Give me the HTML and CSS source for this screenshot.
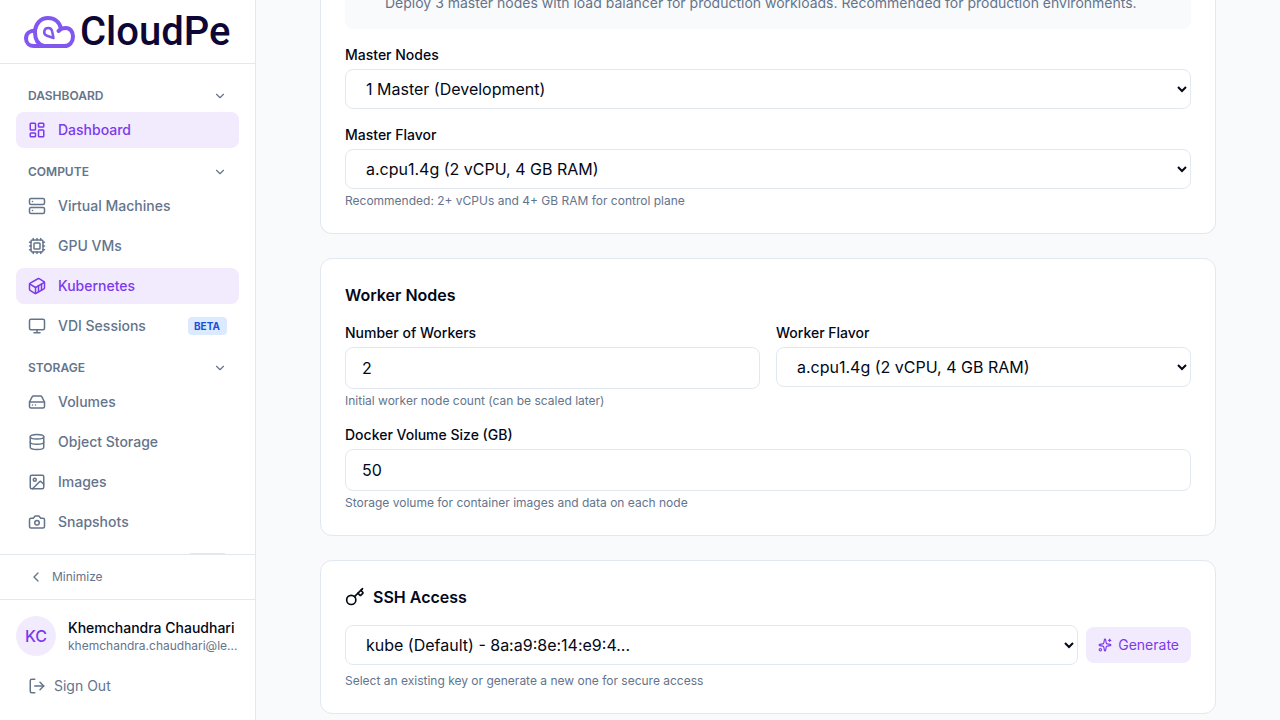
FILE: index.html
```html
<!DOCTYPE html>
<html lang="en">
<head>
    <meta charset="UTF-8">
    <meta name="viewport" content="width=device-width, initial-scale=1.0">
    <title>CloudPe - Create Kubernetes Cluster</title>
    <link rel="stylesheet" href="styles.css">
</head>
<body>
    <div class="app">
        <aside class="sidebar">
            <a class="logo" href="#">
                <svg class="logo-mark" viewBox="0 0 52 34" fill="none" stroke="#8257f0" stroke-width="4" stroke-linecap="round" stroke-linejoin="round">
                    <path d="M34.500 16C36 14 39 13 42 13C46 13 49 16.500 49 21.500C49 27 45.500 31 40.500 31H20C14 29.500 11 25 11 17.500C11 8.500 17 3 24 3C30.500 3 35.500 7 37 13.500"/>
                    <path d="M11 15.500C6 15.500 2 18.500 2 23.500C2 28 5.500 31 10 31H21"/>
                    <path d="M29.500 23L23 20.800A4 4 0 1 1 28.200 16.500Z" stroke-width="2.500"/>
                </svg>
                <span class="logo-text">CloudPe</span>
            </a>

            <nav class="nav">
                <section class="nav-section">
                    <button class="nav-heading" type="button">DASHBOARD
                        <svg class="icon icon-sm" viewBox="0 0 24 24"><path d="m6 9 6 6 6-6"/></svg>
                    </button>
                    <a class="nav-item active" href="#">
                        <svg class="icon" viewBox="0 0 24 24"><rect width="7" height="9" x="3" y="3" rx="1"/><rect width="7" height="5" x="14" y="3" rx="1"/><rect width="7" height="9" x="14" y="12" rx="1"/><rect width="7" height="5" x="3" y="16" rx="1"/></svg>
                        Dashboard
                    </a>
                </section>

                <section class="nav-section">
                    <button class="nav-heading" type="button">COMPUTE
                        <svg class="icon icon-sm" viewBox="0 0 24 24"><path d="m6 9 6 6 6-6"/></svg>
                    </button>
                    <a class="nav-item" href="#">
                        <svg class="icon" viewBox="0 0 24 24"><rect width="20" height="8" x="2" y="2" rx="2"/><rect width="20" height="8" x="2" y="14" rx="2"/><path d="M6 6h.01M6 18h.01"/></svg>
                        Virtual Machines
                    </a>
                    <a class="nav-item" href="#">
                        <svg class="icon" viewBox="0 0 24 24"><path d="M12 20v2M12 2v2M17 20v2M17 2v2M2 12h2M2 17h2M2 7h2M20 12h2M20 17h2M20 7h2M7 20v2M7 2v2"/><rect x="4" y="4" width="16" height="16" rx="2"/><rect x="8" y="8" width="8" height="8" rx="1"/></svg>
                        GPU VMs
                    </a>
                    <a class="nav-item active" href="#">
                        <svg class="icon" viewBox="0 0 24 24"><path d="M22 7.7c0-.6-.4-1.2-.8-1.5l-6.3-3.9a1.72 1.72 0 0 0-1.7 0l-10.3 6c-.5.2-.9.8-.9 1.4v6.6c0 .5.4 1.2.8 1.5l6.3 3.9a1.72 1.72 0 0 0 1.7 0l10.3-6c.5-.3.9-1 .9-1.5Z"/><path d="M10 21.9V14L2.1 9.1"/><path d="m10 14 11.9-6.9"/><path d="M14 19.8v-8.1"/><path d="M18 17.5V9.4"/></svg>
                        Kubernetes
                    </a>
                    <a class="nav-item" href="#">
                        <svg class="icon" viewBox="0 0 24 24"><rect width="20" height="14" x="2" y="3" rx="2"/><path d="M8 21h8M12 17v4"/></svg>
                        VDI Sessions
                        <span class="badge">BETA</span>
                    </a>
                </section>

                <section class="nav-section">
                    <button class="nav-heading" type="button">STORAGE
                        <svg class="icon icon-sm" viewBox="0 0 24 24"><path d="m6 9 6 6 6-6"/></svg>
                    </button>
                    <a class="nav-item" href="#">
                        <svg class="icon" viewBox="0 0 24 24"><path d="M22 12H2"/><path d="M5.450 5.110 2 12v6a2 2 0 0 0 2 2h16a2 2 0 0 0 2-2v-6l-3.450-6.890A2 2 0 0 0 16.760 4H7.240a2 2 0 0 0-1.790 1.110z"/><path d="M6 16h.01M10 16h.01"/></svg>
                        Volumes
                    </a>
                    <a class="nav-item" href="#">
                        <svg class="icon" viewBox="0 0 24 24"><ellipse cx="12" cy="5" rx="9" ry="3"/><path d="M3 5v14a9 3 0 0 0 18 0V5"/><path d="M3 12a9 3 0 0 0 18 0"/></svg>
                        Object Storage
                    </a>
                    <a class="nav-item" href="#">
                        <svg class="icon" viewBox="0 0 24 24"><rect width="18" height="18" x="3" y="3" rx="2"/><circle cx="9" cy="9" r="2"/><path d="m21 15-3.086-3.086a2 2 0 0 0-2.828 0L6 21"/></svg>
                        Images
                    </a>
                    <a class="nav-item" href="#">
                        <svg class="icon" viewBox="0 0 24 24"><path d="M14.500 4h-5L7 7H4a2 2 0 0 0-2 2v9a2 2 0 0 0 2 2h16a2 2 0 0 0 2-2V9a2 2 0 0 0-2-2h-3l-2.500-3z"/><circle cx="12" cy="13" r="3"/></svg>
                        Snapshots
                    </a>
                    <div class="nav-item">
                        <span class="badge badge-muted"></span>
                    </div>
                </section>
            </nav>

            <div class="minimize">
                <button class="minimize-btn" type="button">
                    <svg class="icon icon-md" viewBox="0 0 24 24"><path d="m15 18-6-6 6-6"/></svg>
                    Minimize
                </button>
            </div>

            <div class="account">
                <div class="user">
                    <div class="avatar">KC</div>
                    <div class="user-info">
                        <p class="user-name">Khemchandra Chaudhari</p>
                        <p class="user-email">khemchandra.chaudhari@le...</p>
                    </div>
                </div>
                <button class="sign-out" type="button">
                    <svg class="icon" viewBox="0 0 24 24"><path d="m16 17 5-5-5-5"/><path d="M21 12H9"/><path d="M9 21H5a2 2 0 0 1-2-2V5a2 2 0 0 1 2-2h4"/></svg>
                    Sign Out
                </button>
            </div>
        </aside>

        <main class="main">
            <form class="content">
                <section class="card card-continued">
                    <p class="note">Deploy 3 master nodes with load balancer for production workloads. Recommended for production environments.</p>
                    <div class="field">
                        <label for="masterNodes">Master Nodes</label>
                        <select id="masterNodes">
                            <option>1 Master (Development)</option>
                        </select>
                    </div>
                    <div class="field">
                        <label for="masterFlavor">Master Flavor</label>
                        <select id="masterFlavor">
                            <option>a.cpu1.4g (2 vCPU, 4 GB RAM)</option>
                        </select>
                        <p class="hint">Recommended: 2+ vCPUs and 4+ GB RAM for control plane</p>
                    </div>
                </section>

                <section class="card">
                    <h2>Worker Nodes</h2>
                    <div class="field-row">
                        <div class="field">
                            <label for="workerCount">Number of Workers</label>
                            <input type="text" inputmode="numeric" id="workerCount" value="2">
                            <p class="hint">Initial worker node count (can be scaled later)</p>
                        </div>
                        <div class="field">
                            <label for="workerFlavor">Worker Flavor</label>
                            <select id="workerFlavor">
                                <option>a.cpu1.4g (2 vCPU, 4 GB RAM)</option>
                            </select>
                        </div>
                    </div>
                    <div class="field">
                        <label for="volumeSize">Docker Volume Size (GB)</label>
                        <input type="text" inputmode="numeric" id="volumeSize" value="50">
                        <p class="hint">Storage volume for container images and data on each node</p>
                    </div>
                </section>

                <section class="card">
                    <h2 id="sshTitle">
                        <svg class="icon icon-lg" viewBox="0 0 24 24"><path d="m15.500 7.500 2.300 2.300a1 1 0 0 0 1.400 0l2.100-2.100a1 1 0 0 0 0-1.400L19 4"/><path d="m21 2-9.600 9.600"/><circle cx="7.500" cy="15.500" r="5.500"/></svg>
                        SSH Access
                    </h2>
                    <div class="key-field">
                        <div class="key-row">
                            <select id="sshKey" aria-labelledby="sshTitle">
                                <option>kube (Default) - 8a:a9:8e:14:e9:4...</option>
                            </select>
                            <button class="generate-btn" type="button">
                                <svg class="icon icon-sm" viewBox="0 0 24 24"><path d="M11.017 2.814a1 1 0 0 1 1.966 0l1.051 5.558a2 2 0 0 0 1.594 1.594l5.558 1.051a1 1 0 0 1 0 1.966l-5.558 1.051a2 2 0 0 0-1.594 1.594l-1.051 5.558a1 1 0 0 1-1.966 0l-1.051-5.558a2 2 0 0 0-1.594-1.594l-5.558-1.051a1 1 0 0 1 0-1.966l5.558-1.051a2 2 0 0 0 1.594-1.594z"/><path d="M20 2v4M22 4h-4"/><circle cx="4" cy="20" r="2"/></svg>
                                Generate
                            </button>
                        </div>
                        <p class="hint">Select an existing key or generate a new one for secure access</p>
                    </div>
                </section>
            </form>
        </main>
    </div>
</body>
</html>
```

FILE: styles.css
```css
:root {
    --primary: #7c3aed;
    --primary-light: #f2ebfd;
    --text: #020817;
    --muted: #64748b;
    --border: #e2e8f0;
    --background: #f8fafc;
}

* {
    margin: 0;
    padding: 0;
    box-sizing: border-box;
}

body {
    font-family: Inter, "Liberation Sans", sans-serif;
    font-size: 14px;
    line-height: 20px;
    color: var(--text);
    background-color: var(--background);
}

button,
input,
select {
    font: inherit;
    color: inherit;
}

button {
    background: none;
    border: none;
    cursor: pointer;
}

a {
    color: inherit;
    text-decoration: none;
}

.app {
    display: flex;
    height: 100vh;
    overflow: hidden;
}

.icon {
    width: 18px;
    height: 18px;
    flex-shrink: 0;
    fill: none;
    stroke: currentColor;
    stroke-width: 2;
    stroke-linecap: round;
    stroke-linejoin: round;
}

.icon-sm {
    width: 14px;
    height: 14px;
}

.icon-md {
    width: 16px;
    height: 16px;
}

.icon-lg {
    width: 20px;
    height: 20px;
}

/* Sidebar */
.sidebar {
    display: flex;
    flex-direction: column;
    flex-shrink: 0;
    width: 256px;
    background-color: white;
    border-right: 1px solid var(--border);
    color: var(--muted);
}

.logo {
    display: flex;
    align-items: center;
    gap: 4px;
    flex-shrink: 0;
    height: 64px;
    padding: 1px 24px 0;
    border-bottom: 1px solid var(--border);
}

.logo-mark {
    width: 52px;
    height: 34px;
    flex-shrink: 0;
}

.logo-text {
    font-family: Roboto, "Liberation Sans", sans-serif;
    font-size: 40px;
    font-weight: 500;
    line-height: 48px;
    color: #0e0736;
}

.nav {
    flex: 1;
    min-height: 0;
    overflow: hidden;
    padding: 16px;
    display: flex;
    flex-direction: column;
    gap: 8px;
}

.nav-section {
    display: flex;
    flex-direction: column;
    flex-shrink: 0;
    gap: 4px;
}

.nav-heading {
    display: flex;
    align-items: center;
    justify-content: space-between;
    padding: 8px 12px 4px;
    font-size: 12px;
    font-weight: 600;
    line-height: 16px;
}

.nav-item {
    display: flex;
    align-items: center;
    gap: 12px;
    height: 36px;
    padding: 0 12px;
    border-radius: 8px;
    font-weight: 500;
}

.nav-item.active {
    color: var(--primary);
    background-color: var(--primary-light);
}

.badge {
    margin-left: auto;
    min-width: 39px;
    height: 18px;
    padding: 0 6px;
    border-radius: 4px;
    background-color: #dbeafe;
    color: #1d4ed8;
    font-size: 10px;
    font-weight: 700;
    line-height: 18px;
}

.badge-muted {
    background-color: var(--border);
}

.minimize {
    padding: 8px 16px;
    border-top: 1px solid var(--border);
}

.minimize-btn {
    display: flex;
    align-items: center;
    gap: 8px;
    width: 100%;
    padding: 6px 12px;
    font-size: 12px;
    line-height: 16px;
}

.account {
    display: flex;
    flex-direction: column;
    gap: 12px;
    padding: 16px;
    border-top: 1px solid var(--border);
}

.user {
    display: flex;
    align-items: center;
    gap: 12px;
}

.avatar {
    display: flex;
    align-items: center;
    justify-content: center;
    width: 40px;
    height: 40px;
    flex-shrink: 0;
    border-radius: 50%;
    background-color: var(--primary-light);
    color: var(--primary);
    font-size: 16px;
    font-weight: 500;
}

.user-info {
    white-space: nowrap;
}

.user-name {
    color: var(--text);
    font-weight: 500;
}

.user-email {
    font-size: 12px;
    line-height: 16px;
}

.sign-out {
    display: flex;
    align-items: center;
    gap: 8px;
    padding: 8px 12px;
}

/* Form */
.main {
    flex: 1;
    min-width: 0;
    overflow: hidden;
}

.content {
    display: flex;
    flex-direction: column;
    gap: 24px;
    max-width: 896px;
    margin: 0 auto;
}

.card {
    display: flex;
    flex-direction: column;
    gap: 16px;
    padding: 24px;
    background-color: white;
    border: 1px solid var(--border);
    border-radius: 12px;
}

.card-continued {
    margin-top: -7px;
    padding-top: 0;
    border-top: none;
    border-radius: 0 0 12px 12px;
}

.note {
    padding: 0 16px 16px 40px;
    border-radius: 0 0 8px 8px;
    background-color: #f9fafb;
    color: var(--muted);
}

h2 {
    display: flex;
    align-items: center;
    gap: 8px;
    font-size: 16px;
    font-weight: 600;
    line-height: 24px;
}

.field {
    display: flex;
    flex-direction: column;
    gap: 4px;
}

.field-row {
    display: grid;
    grid-template-columns: 1fr 1fr;
    gap: 16px;
}

label {
    font-weight: 500;
}

input,
select {
    width: 100%;
    padding: 8px 16px;
    background-color: white;
    border: 1px solid var(--border);
    border-radius: 8px;
    font-size: 16px;
    line-height: 24px;
}

select {
    height: 40px;
}

.hint {
    color: var(--muted);
    font-size: 12px;
    line-height: 16px;
}

.key-field {
    display: flex;
    flex-direction: column;
    gap: 8px;
}

.key-row {
    display: flex;
    align-items: center;
    gap: 8px;
}

.key-row select {
    flex: 1;
    min-width: 0;
}

.generate-btn {
    display: flex;
    align-items: center;
    gap: 6px;
    flex-shrink: 0;
    padding: 8px 12px;
    border-radius: 8px;
    background-color: var(--primary-light);
    color: var(--primary);
}

input:focus,
select:focus {
    outline: 2px solid var(--primary);
}

@media (max-width: 768px) {
    .sidebar {
        display: none;
    }

    .field-row {
        grid-template-columns: 1fr;
    }
}
```
